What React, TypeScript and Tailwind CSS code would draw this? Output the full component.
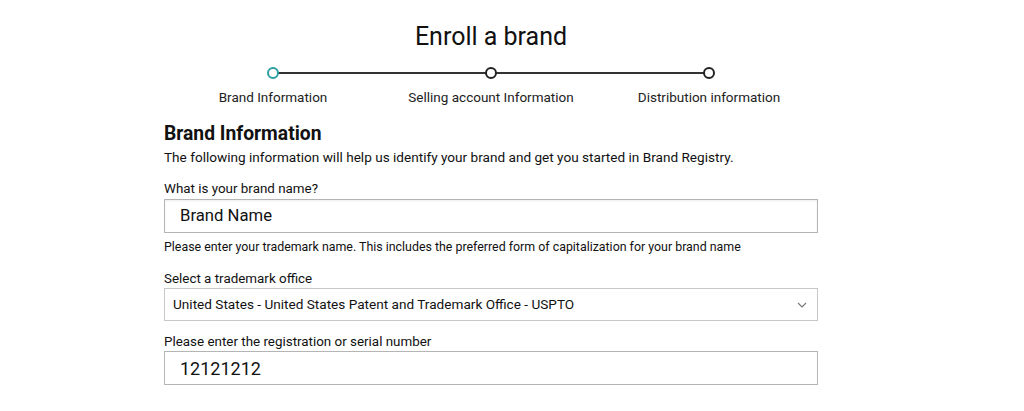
import React from "react";

const font = { fontFamily: "Roboto, 'Noto Sans', sans-serif" };

function Step({ label, active }: { label: string; active?: boolean }) {
  return (
    <div className="flex flex-col items-center">
      <div
        className={`relative z-10 h-[12px] w-[12px] rounded-full border-2 bg-white ${
          active ? "border-[#2aa0a2]" : "border-[#222]"
        }`}
      />
      <div className="mt-[10px] text-[13.5px] leading-[16px] text-[#222]">{label}</div>
    </div>
  );
}

export default function App() {
  return (
    <div className="h-[411px] w-[1024px] overflow-hidden bg-white text-[#0f1111]" style={font}>
      <div className="ml-[164px] w-[654px] pt-[23px]">
        <h1 className="text-center text-[25px] leading-[28px] text-[#111]">Enroll a brand</h1>
        <div className="relative mt-[16px] grid grid-cols-3">
          <div className="absolute left-[109px] right-[109px] top-[5px] h-[2px] bg-[#333]" />
          <Step label="Brand Information" active />
          <Step label="Selling account Information" />
          <Step label="Distribution information" />
        </div>
        <h2 className="mt-[18px] text-[19.3px] font-bold leading-[22px] text-[#111]">Brand Information</h2>
        <p className="mt-[3px] text-[13.6px] leading-[18px] text-[#111]">
          The following information will help us identify your brand and get you started in Brand Registry.
        </p>
        <div className="mt-[14px] text-[13.4px] leading-[18px] text-[#111]">What is your brand name?</div>
        <div className="mt-[1px] flex h-[34px] items-center border border-[#b5b5b5] px-[15px] text-[16.7px] text-[#111] shadow-[inset_0_1px_2px_rgba(0,0,0,0.08)]">
          Brand Name
        </div>
        <div className="mt-[6px] text-[12.4px] leading-[16px] text-[#111]">
          Please enter your trademark name. This includes the preferred form of capitalization for your brand name
        </div>
        <div className="mt-[15px] text-[13.4px] leading-[18px] text-[#111]">Select a trademark office</div>
        <div className="flex h-[33px] items-center justify-between border border-[#c8c8c8] pl-[8px] pr-[10px] text-[13.6px] text-[#111]">
          <span>United States - United States Patent and Trademark Office - USPTO</span>
          <svg width="10" height="6" viewBox="0 0 10 6" fill="none">
            <path d="M1 1l4 4 4-4" stroke="#777" strokeWidth="1.2" />
          </svg>
        </div>
        <div className="mt-[12px] text-[13.4px] leading-[18px] text-[#111]">Please enter the registration or serial number</div>
        <div className="flex h-[34px] items-center border border-[#b5b5b5] px-[15px] text-[18px] text-[#111]">
          12121212
        </div>
      </div>
    </div>
  );
}
